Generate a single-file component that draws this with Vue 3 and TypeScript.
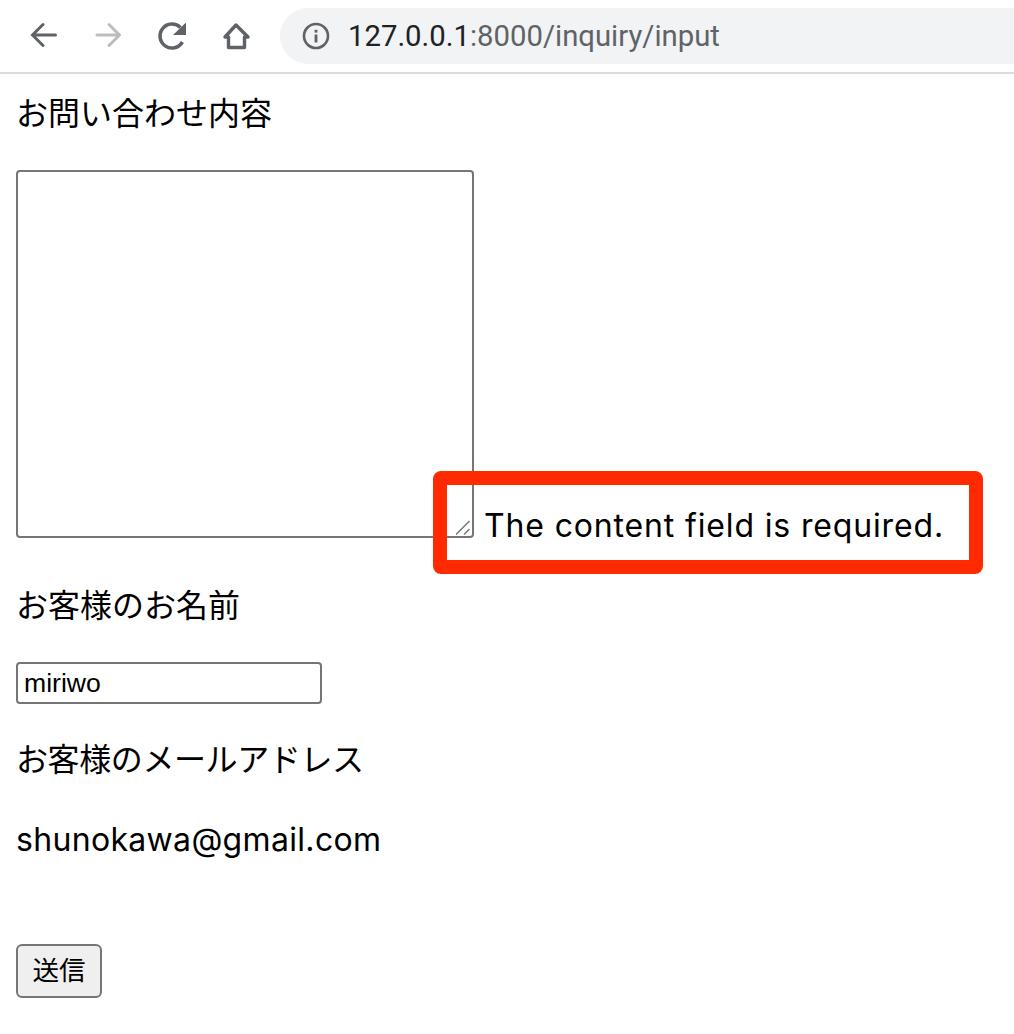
<template>
  <div class="page">
    <header class="toolbar">
      <div class="nav-icons">
        <svg class="nav-icon" viewBox="0 0 32 32" aria-label="Back">
          <path d="M27.500 15H5M15 4.500 4.500 15 15 25.500" class="stroke" />
        </svg>
        <svg class="nav-icon disabled" viewBox="0 0 32 32" aria-label="Forward">
          <path d="M5 15h22.500M17 4.500 27.500 15 17 25.500" class="stroke" />
        </svg>
        <svg class="nav-icon" viewBox="0 0 32 32" aria-label="Reload">
          <path d="M26.400 22A12 12 0 1 1 24.500 7.500" class="stroke butt" />
          <path d="M30 2.500V15H17z" class="fill" />
        </svg>
        <svg class="nav-icon" viewBox="0 0 32 32" aria-label="Home">
          <path d="M16 5 28 17h-3.500v10.500h-16V17H5z" class="stroke join" />
        </svg>
      </div>
      <div class="address">
        <svg class="info" viewBox="0 0 28 28" aria-label="Site information">
          <circle cx="14" cy="14" r="12" class="ring" />
          <rect x="12.600" y="12.500" width="2.800" height="8" class="dot" />
          <rect x="12.600" y="7.800" width="2.800" height="2.800" class="dot" />
        </svg>
        <span class="url"><span class="host">127.0.0.1</span>:8000/inquiry/input</span>
      </div>
    </header>

    <main class="form">
      <p class="label first">お問い合わせ内容</p>
      <div class="content-row">
        <textarea v-model="content" class="content-box"></textarea>
        <span class="error">The content field is required.</span>
        <svg class="grip" viewBox="0 0 16 16">
          <path d="M0 14.500 13.500 1M8 14.500 13.500 9" />
        </svg>
        <div class="highlight"></div>
      </div>

      <p class="label name-label">お客様のお名前</p>
      <input v-model="name" class="name-input" type="text" />

      <p class="label mail-label">お客様のメールアドレス</p>
      <p class="mail">shunokawa@gmail.com</p>

      <button class="send" type="button">送信</button>
    </main>
  </div>
</template>

<script setup lang="ts">
import { ref } from 'vue';

const content = ref('');
const name = ref('miriwo');
</script>

<style>
html, body {
  margin: 0;
  background: #fff;
}
</style>

<style scoped>
.page {
  width: 1014px;
  height: 1034px;
  overflow: hidden;
  font-family: "Liberation Sans", "Noto Sans CJK JP", sans-serif;
  color: #000;
}

.toolbar {
  display: flex;
  align-items: center;
  height: 72px;
  padding-left: 28px;
  border-bottom: 2px solid #dadce0;
}
.nav-icons {
  display: flex;
  gap: 32px;
  align-items: center;
}
.nav-icon {
  width: 32px;
  height: 32px;
  display: block;
}
.stroke {
  fill: none;
  stroke: #5f6368;
  stroke-width: 3;
  stroke-linecap: round;
}
.butt {
  stroke-linecap: butt;
  stroke-width: 3.500;
}
.join {
  stroke-linejoin: round;
  stroke-width: 3.400;
}
.fill {
  fill: #5f6368;
}
.disabled .stroke {
  stroke: #bdbdbd;
}

.address {
  flex: 1;
  display: flex;
  align-items: center;
  height: 56px;
  margin-left: 28px;
  padding-left: 22px;
  border-radius: 28px 0 0 28px;
  background: #f1f3f4;
}
.info {
  width: 28px;
  height: 28px;
  flex: none;
}
.ring {
  fill: none;
  stroke: #5f6368;
  stroke-width: 2.600;
}
.dot {
  fill: #5f6368;
}
.url {
  margin-left: 18px;
  font-family: Roboto, "Liberation Sans", sans-serif;
  font-size: 29.300px;
  color: #5f6368;
}
.host {
  color: #202124;
}

.form {
  padding-left: 16px;
}
.label {
  margin: 0;
  font-size: 32px;
  line-height: 40px;
}
.first {
  margin-top: 20px;
}

.content-row {
  position: relative;
  display: flex;
  align-items: flex-end;
  margin-top: 36px;
  height: 368px;
}
.content-box {
  width: 458px;
  height: 368px;
  box-sizing: border-box;
  flex: none;
  margin: 0;
  border: 2px solid #767676;
  border-radius: 4px;
  background: #fff;
  outline: none;
  resize: none;
}
.error {
  margin-left: 10px;
  margin-bottom: -10px;
  white-space: nowrap;
  font-family: Inter, "Noto Sans CJK JP", sans-serif;
  font-size: 32px;
  letter-spacing: 0.850px;
  line-height: 44px;
}
.grip {
  position: absolute;
  left: 440px;
  top: 350px;
  width: 16px;
  height: 16px;
  fill: none;
  stroke: #767676;
  stroke-width: 1.500;
  pointer-events: none;
}
.highlight {
  position: absolute;
  left: 417px;
  top: 301px;
  width: 550px;
  height: 103px;
  box-sizing: border-box;
  border: 14px solid #ff2a00;
  border-radius: 8px;
  pointer-events: none;
}

.name-label {
  margin-top: 48px;
}
.name-input {
  display: block;
  width: 306px;
  height: 42px;
  box-sizing: border-box;
  margin-top: 36px;
  padding: 0 6px;
  border: 2px solid #767676;
  border-radius: 4px;
  font-family: "Liberation Sans", sans-serif;
  font-size: 26.600px;
  color: #000;
  background: #fff;
  outline: none;
}
.mail-label {
  margin-top: 36px;
  letter-spacing: -0.400px;
}
.mail {
  margin: 40px 0 0;
  font-family: Inter, "Liberation Sans", sans-serif;
  font-size: 32px;
  letter-spacing: 0.320px;
  line-height: 40px;
}
.send {
  display: block;
  width: 86px;
  height: 54px;
  box-sizing: border-box;
  margin-top: 84px;
  padding: 0 0 5px;
  border: 2px solid #767676;
  border-radius: 6px;
  background: #efefef;
  font-family: "Noto Sans CJK JP", sans-serif;
  font-size: 26.600px;
  color: #000;
}
</style>
